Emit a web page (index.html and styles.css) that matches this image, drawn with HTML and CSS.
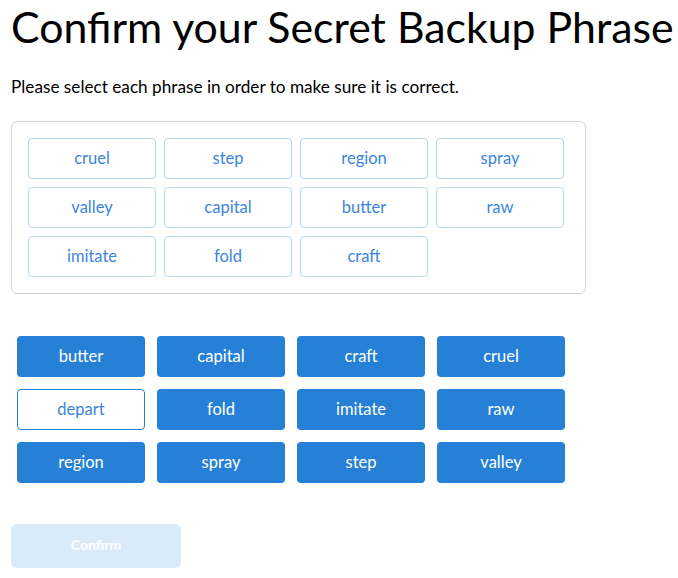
FILE: index.html
```html
<!DOCTYPE html>
<html>
<head>
<meta charset="utf-8">
<link rel="stylesheet" href="styles.css">
</head>
<body>
<div class="page">
  <h1 class="title">Confirm your Secret Backup Phrase</h1>
  <p class="intro">Please select each phrase in order to make sure it is correct.</p>
  <div class="selected">
    <div class="chip">cruel</div>
    <div class="chip">step</div>
    <div class="chip">region</div>
    <div class="chip">spray</div>
    <div class="chip">valley</div>
    <div class="chip">capital</div>
    <div class="chip">butter</div>
    <div class="chip">raw</div>
    <div class="chip">imitate</div>
    <div class="chip">fold</div>
    <div class="chip">craft</div>
  </div>
  <div class="pool">
    <div class="word">butter</div>
    <div class="word">capital</div>
    <div class="word">craft</div>
    <div class="word">cruel</div>
    <div class="word word--open">depart</div>
    <div class="word">fold</div>
    <div class="word">imitate</div>
    <div class="word">raw</div>
    <div class="word">region</div>
    <div class="word">spray</div>
    <div class="word">step</div>
    <div class="word">valley</div>
  </div>
  <button class="confirm" disabled>Confirm</button>
</div>
</body>
</html>
```

FILE: styles.css
```css
html, body {
  margin: 0;
  padding: 0;
  background: #ffffff;
}
body {
  font-family: "Lato", "Noto Sans", sans-serif;
  color: #000;
}
.page {
  padding: 0 11px;
}
.title {
  margin: 0;
  padding-top: 2px;
  font-size: 42.8px;
  font-weight: 400;
  line-height: 50px;
  white-space: nowrap;
}
.intro {
  margin: 23px 0 0;
  font-size: 17.2px;
  line-height: 24px;
}
.selected {
  margin-top: 22px;
  width: 575px;
  height: 173px;
  box-sizing: border-box;
  border: 1px solid #d0d4d8;
  border-radius: 6px;
  padding: 12px;
  display: flex;
  flex-wrap: wrap;
  align-content: flex-start;
}
.chip {
  width: 128px;
  height: 41px;
  margin: 4px;
  padding-bottom: 1px;
  box-sizing: border-box;
  border: 1px solid #b5d6f2;
  border-radius: 4px;
  display: flex;
  align-items: center;
  justify-content: center;
  font-size: 16.5px;
  color: #3a86df;
}
.pool {
  margin-top: 36px;
  width: 560px;
  display: flex;
  flex-wrap: wrap;
}
.word {
  width: 128px;
  height: 41px;
  margin: 6px;
  padding-bottom: 1px;
  box-sizing: border-box;
  border-radius: 4px;
  background: #2680d6;
  color: #ffffff;
  display: flex;
  align-items: center;
  justify-content: center;
  font-size: 16.5px;
}
.word--open {
  background: #ffffff;
  border: 1px solid #2680d6;
  color: #3a86df;
}
.confirm {
  display: block;
  margin-top: 35px;
  width: 170px;
  height: 44px;
  padding-bottom: 4px;
  border: none;
  border-radius: 6px;
  background: #dbeaf8;
  color: #ffffff;
  font-family: inherit;
  font-size: 14px;
  font-weight: 700;
}
```
